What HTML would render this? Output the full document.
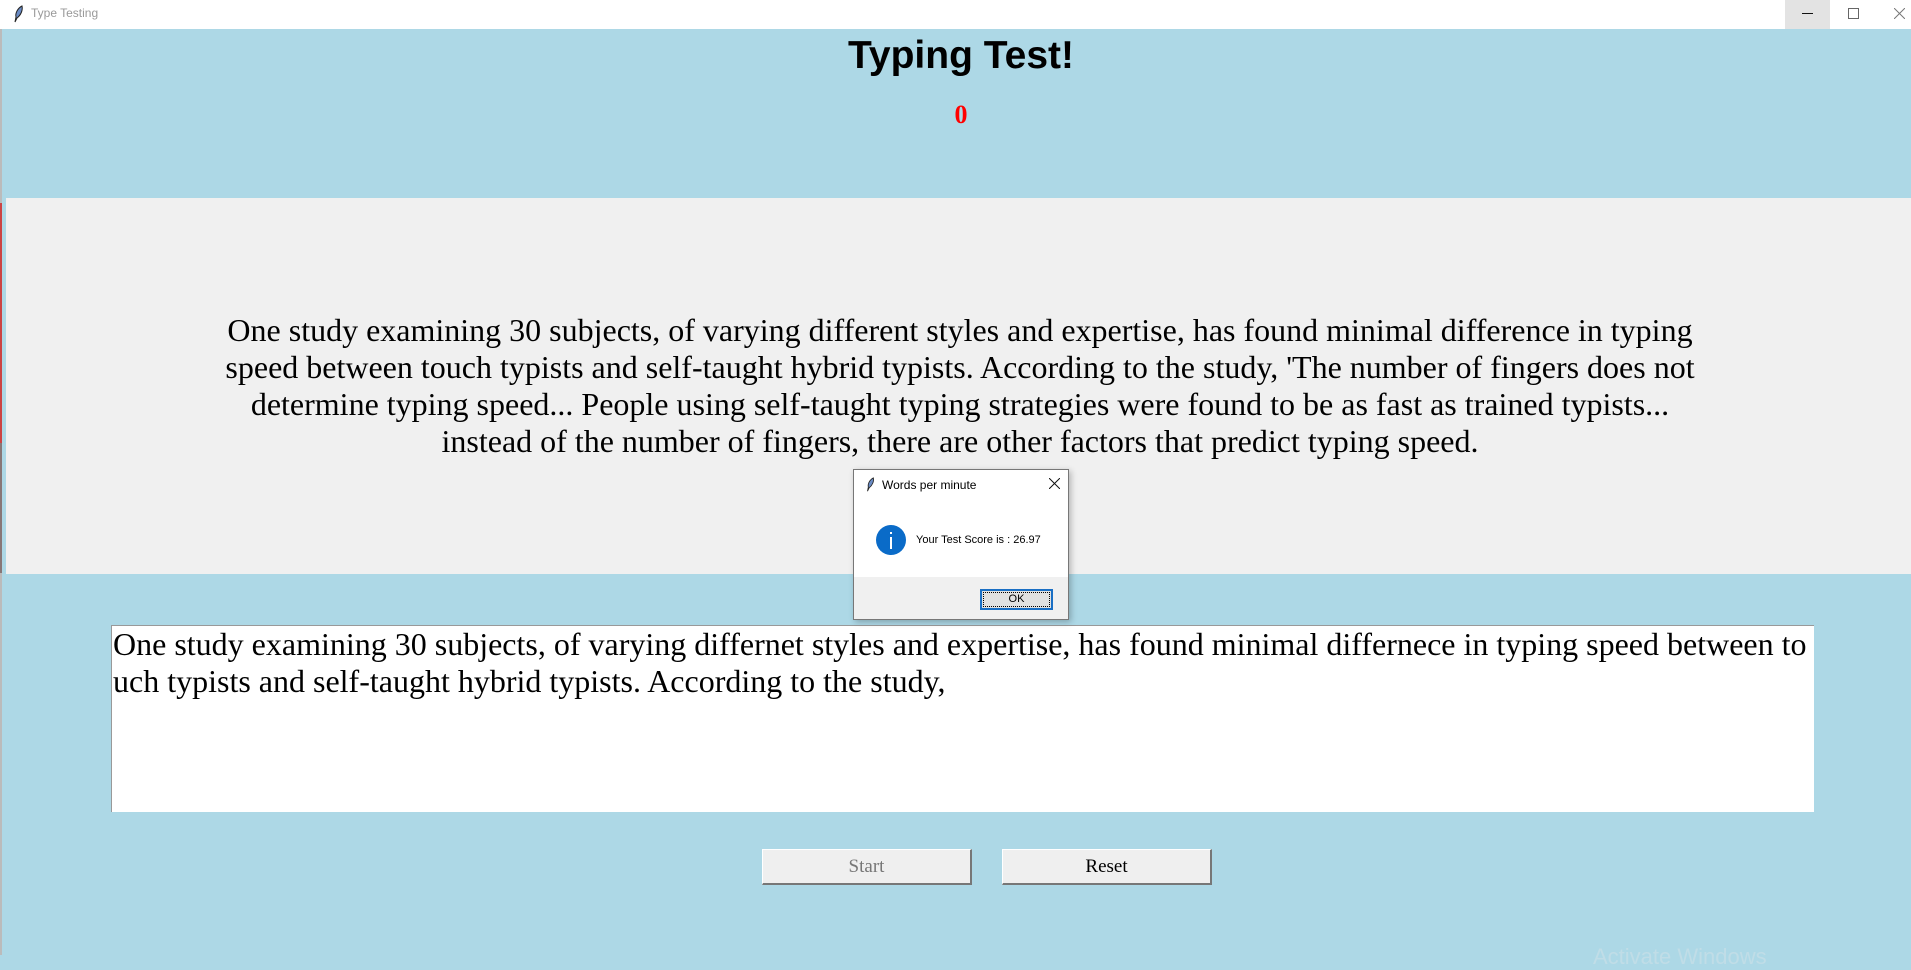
<!DOCTYPE html>
<html><head><meta charset="utf-8"><style>
body{margin:0;width:1911px;height:955px;overflow:hidden;position:relative;background:#add8e6;font-family:"Liberation Serif",serif}
.abs{position:absolute}
.tb{left:0;top:0;width:1911px;height:29px;background:#fff}
.gray{left:6px;top:198px;width:1905px;height:376px;background:#f0f0f0}
.line{left:0;width:1920px;text-align:center;font-size:32px;line-height:37px;color:#000;white-space:nowrap}
.btn{background:#efefef;border-top:1px solid #fff;border-left:1px solid #fff;border-right:2px solid #777;border-bottom:2px solid #777;box-sizing:border-box;text-align:center;font-size:19px;line-height:34px}
</style></head><body>
<div class="abs tb"></div>
<svg class="abs" style="left:12px;top:5px" width="12" height="18" viewBox="0 0 12 18"><path d="M3 17 L4 12 C3 8 6 3 10 1 C11 5 9 10 5 13 Z" fill="#6a8bc4" stroke="#222" stroke-width="1"/></svg>
<div class="abs" style="left:31px;top:6px;font:12px 'Liberation Sans',sans-serif;color:#999">Type Testing</div>
<div class="abs" style="left:1785px;top:0;width:45px;height:29px;background:#e3e3e3"></div>
<div class="abs" style="left:1802px;top:13px;width:11px;height:1px;background:#111"></div>
<div class="abs" style="left:1848px;top:8px;width:9px;height:9px;border:1px solid #666"></div>
<svg class="abs" style="left:1894px;top:8px" width="11" height="11"><path d="M0 0L11 11M11 0L0 11" stroke="#777" stroke-width="1"/></svg>
<div class="abs" style="left:0;top:29px;width:2px;height:926px;background:#bbb"></div>
<div class="abs gray"></div>
<div class="abs" style="left:0;top:203px;width:2px;height:240px;background:#c44"></div>
<div class="abs" style="left:0;top:443px;width:2px;height:130px;background:#877"></div>
<div class="abs" style="left:0;top:34px;width:1922px;text-align:center;font:bold 39px 'Liberation Sans',sans-serif">Typing Test!</div>
<div class="abs" style="left:0;top:100px;width:1922px;text-align:center;font-weight:bold;font-size:26px;color:#f00">0</div>
<div class="abs line" style="top:312px">One study examining 30 subjects, of varying different styles and expertise, has found minimal difference in typing</div>
<div class="abs line" style="top:349px">speed between touch typists and self-taught hybrid typists. According to the study, 'The number of fingers does not</div>
<div class="abs line" style="top:386px">determine typing speed... People using self-taught typing strategies were found to be as fast as trained typists...</div>
<div class="abs line" style="top:423px">instead of the number of fingers, there are other factors that predict typing speed.</div>
<div class="abs" style="left:111px;top:625px;width:1703px;height:187px;background:#fff;border-top:1px solid #999;border-left:1px solid #999;box-sizing:border-box;padding:0 0 0 1px;font-size:32px;line-height:37px;white-space:nowrap">One study examining 30 subjects, of varying differnet styles and expertise, has found minimal differnece in typing speed between to<br>uch typists and self-taught hybrid typists. According to the study,</div>
<div class="abs btn" style="left:762px;top:849px;width:210px;height:36px;color:#777">Start</div>
<div class="abs btn" style="left:1002px;top:849px;width:210px;height:36px">Reset</div>
<div class="abs" style="left:853px;top:469px;width:216px;height:151px;background:#fff;border:1px solid #777;box-sizing:border-box;box-shadow:2px 2px 6px rgba(0,0,0,.25)">
 <div class="abs" style="left:0;top:107px;width:214px;height:42px;background:#f0f0f0"></div>
 <svg class="abs" style="left:11px;top:7px" width="10" height="15" viewBox="0 0 12 18"><path d="M3 17 L4 12 C3 8 6 3 10 1 C11 5 9 10 5 13 Z" fill="#6a8bc4" stroke="#222" stroke-width="1"/></svg>
 <div class="abs" style="left:28px;top:8px;font:12px 'Liberation Sans',sans-serif;color:#000">Words per minute</div>
 <svg class="abs" style="left:195px;top:8px" width="11" height="11"><path d="M0 0L11 11M11 0L0 11" stroke="#111" stroke-width="1"/></svg>
 <svg class="abs" style="left:22px;top:55px" width="30" height="30"><circle cx="15" cy="15" r="15" fill="#0a6bc8"/><rect x="14" y="12" width="2" height="12" fill="#fff"/><rect x="14" y="7" width="2" height="2" fill="#fff"/></svg>
 <div class="abs" style="left:62px;top:64px;font:11px 'Liberation Sans',sans-serif;color:#000">Your Test Score is : 26.97</div>
 <div class="abs" style="left:126px;top:119px;width:73px;height:21px;border:2px solid #1a6fc4;box-sizing:border-box;background:#e1e1e1;text-align:center;font:11px/17px 'Liberation Sans',sans-serif;outline:1px dotted #000;outline-offset:-4px">OK</div>
</div>
<div class="abs" style="left:1593px;top:944px;font:22px 'Liberation Sans',sans-serif;color:#c0dde7">Activate Windows</div>
</body></html>
